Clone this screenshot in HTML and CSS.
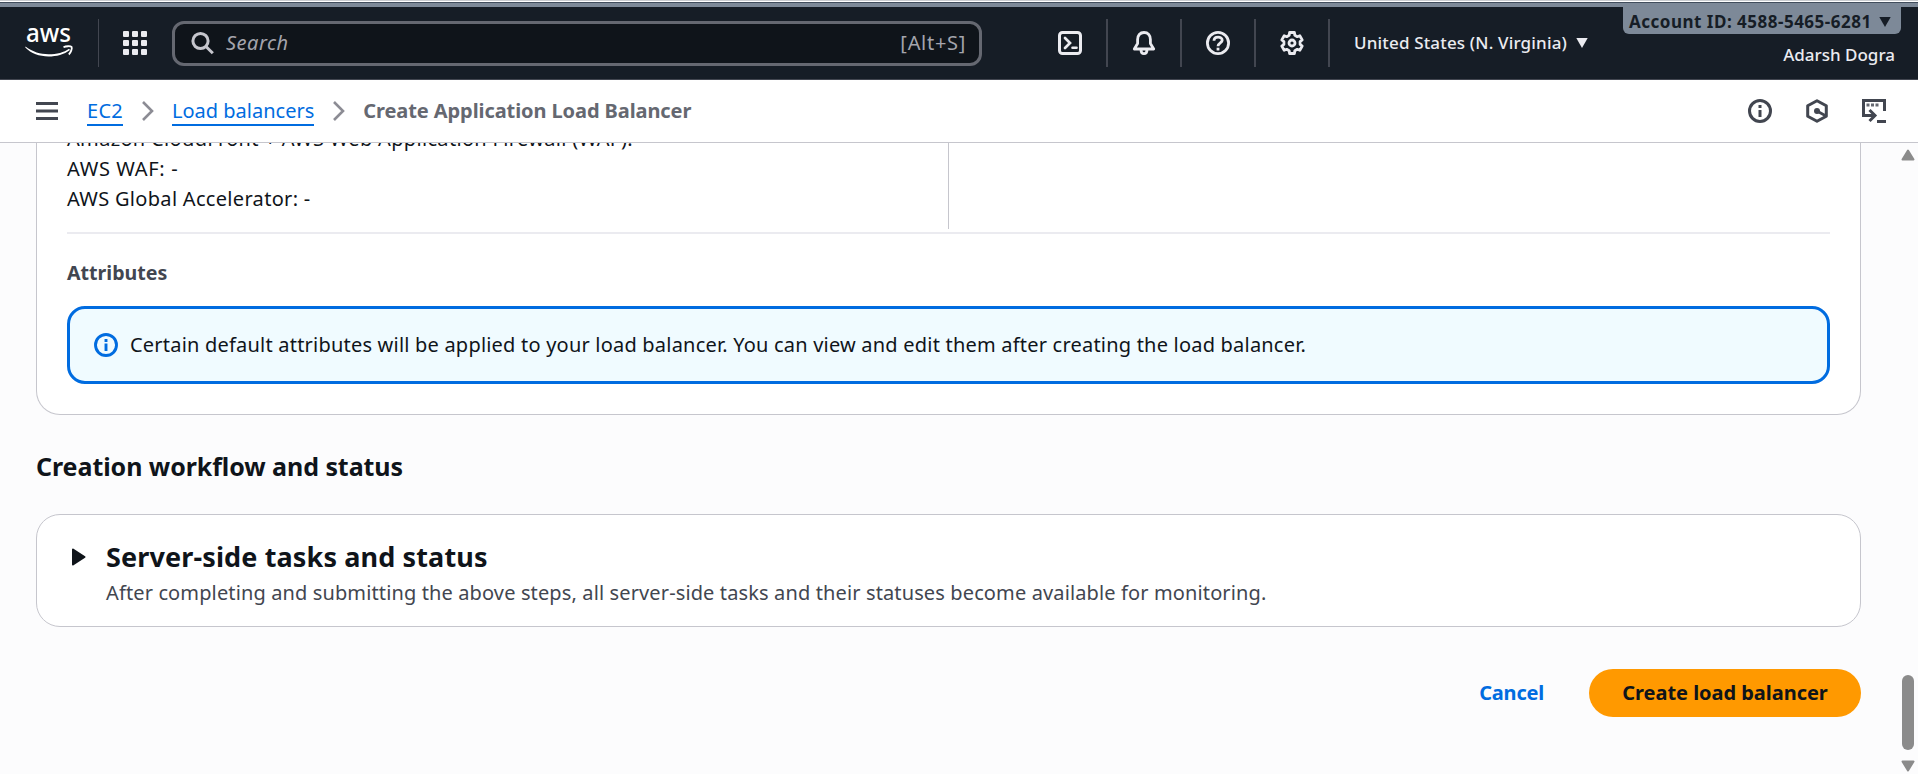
FILE: index.html
```html
<!DOCTYPE html>
<html lang="en">
<head>
<meta charset="utf-8">
<title>Create Application Load Balancer</title>
<link rel="stylesheet" href="styles.css">
</head>
<body>
<div class="account-strip"></div>
<header class="nav">
  <svg class="nav-logo" width="48" height="34" viewBox="0 0 48 34" role="img" aria-label="AWS">
    <text class="logo-text" x="1" y="16.300" textLength="45" lengthAdjust="spacingAndGlyphs">aws</text>
    <path d="M.5 20.600C8 26 15 28.300 23.500 28.300S39 26.300 44 22.700L45 24C39 28.500 31.500 30.500 23.500 30.500 14.500 30.500 6 27.500.3 21.600Z" fill="#fff"/>
    <path d="M38.500 21.300C41 20 45.500 19.900 46.600 20.900 47.300 22 46 26.500 43.800 28.500" fill="none" stroke="#fff" stroke-width="1.800"/>
  </svg>
  <i class="nav-divider nav-divider-thin"></i>
  <svg class="nav-apps" width="24" height="24" fill="#ebebf0">
    <rect width="6" height="6" rx="1"/><rect x="9" width="6" height="6" rx="1"/><rect x="18" width="6" height="6" rx="1"/>
    <rect y="9" width="6" height="6" rx="1"/><rect x="9" y="9" width="6" height="6" rx="1"/><rect x="18" y="9" width="6" height="6" rx="1"/>
    <rect y="18" width="6" height="6" rx="1"/><rect x="9" y="18" width="6" height="6" rx="1"/><rect x="18" y="18" width="6" height="6" rx="1"/>
  </svg>
  <div class="search">
    <svg width="24" height="24" viewBox="0 0 24 24" fill="none" stroke="#c6c6cd" stroke-width="3"><circle cx="9.500" cy="10" r="7.600"/><path d="M15 15.500L21.800 22.300"/></svg>
    <span class="search-placeholder">Search</span>
    <span class="search-key">[Alt+S]</span>
  </div>
  <div class="nav-tools">
    <svg width="24" height="24" viewBox="0 0 24 24" fill="none" stroke="#ebebf0" stroke-width="3"><rect x="1.500" y="1.500" width="21" height="21" rx="3"/><path d="M7 7L12 12L7 17" stroke-width="2.700" stroke-linecap="round"/><path d="M14.500 16.700H18.500" stroke-linecap="round" stroke-width="2.600"/></svg>
    <i class="nav-divider"></i>
    <svg width="24" height="24" viewBox="0 0 24 24" fill="none" stroke="#ebebf0" stroke-width="2.800" stroke-linejoin="round"><path d="M12 1.500C8 1.500 5.600 4.500 5.600 8.500V12.500L2.300 18H21.700L18.400 12.500V8.500C18.400 4.500 16 1.500 12 1.500Z"/><path d="M9 18.500C9 24 15 24 15 18.500"/></svg>
    <i class="nav-divider"></i>
    <svg width="24" height="24" viewBox="0 0 24 24" fill="none" stroke="#ebebf0" stroke-width="2.800"><circle cx="12" cy="12" r="10.600"/><path d="M8 9.800C8 4.800 16.200 5 16.200 9.300 16.200 12 12 11.800 12 15.300"/><path d="M12 16.700V19.500"/></svg>
    <i class="nav-divider"></i>
    <svg width="24" height="24" viewBox="0 0 24 24" fill="none" stroke="#ebebf0" stroke-width="2.800" stroke-linejoin="round"><path d="M9.600 1.500H14.400L14.800 4.300L17.300 5.700L19.800 4.700L22.200 8.900L20.100 10.600V13.400L22.200 15.100L19.800 19.300L17.300 18.300L14.800 19.700L14.400 22.500H9.600L9.200 19.700L6.700 18.300L4.200 19.300L1.800 15.100L3.900 13.400V10.600L1.800 8.900L4.200 4.700L6.700 5.700L9.200 4.300Z"/><circle cx="12" cy="12" r="3"/></svg>
    <i class="nav-divider"></i>
  </div>
  <div class="region"><span class="region-name">United States (N. Virginia)</span><svg width="12" height="10"><path d="M.3 0H11.700L6 10Z" fill="#ebebf0"/></svg></div>
  <div class="account">
    <div class="account-tab"><span class="account-id">Account ID: 4588-5465-6281</span><svg width="12" height="10"><path d="M.3 0H11.700L6 10Z" fill="#161d26"/></svg></div>
    <div class="account-user">Adarsh Dogra</div>
  </div>
</header>
<nav class="crumbs">
  <svg class="menu" width="22" height="18"><path d="M0 1.500H22M0 9H22M0 16.500H22" stroke="#424650" stroke-width="3"/></svg>
  <a class="crumb crumb-ec2">EC2</a>
  <svg class="chevron" width="12" height="20" viewBox="0 0 12 20"><path d="M1 1L10 10L1 19" fill="none" stroke="#8c8c94" stroke-width="2.600"/></svg>
  <a class="crumb crumb-lb">Load balancers</a>
  <svg class="chevron" width="12" height="20" viewBox="0 0 12 20"><path d="M1 1L10 10L1 19" fill="none" stroke="#8c8c94" stroke-width="2.600"/></svg>
  <span class="crumb-current">Create Application Load Balancer</span>
  <div class="crumb-tools">
    <svg width="24" height="24" viewBox="0 0 24 24" fill="none" stroke="#424650" stroke-width="3"><circle cx="12" cy="12" r="10.500"/><path d="M12 6V9M12 11V18"/></svg>
    <svg width="24" height="24" viewBox="0 0 24 24" fill="none" stroke="#424650" stroke-width="3"><path d="M12 1.700L21.300 6.800V17.200L12 22.300L2.700 17.200V6.800Z" stroke-linejoin="round"/><circle cx="12" cy="12" r="3" fill="#424650" stroke="none"/><path d="M12 12L21 17" stroke-width="2.600"/></svg>
    <svg width="24" height="24" viewBox="0 0 24 24" fill="none" stroke="#424650" stroke-width="3"><path d="M22.500 12V1.500H1.500V16.500H12M7.500 11L13 16.500L7.500 22"/><path d="M15 22.500H24"/><path d="M4.500 6H7.500M9 6H12M13.500 6H16.500" stroke="#656871"/></svg>
  </div>
</nav>
<div class="viewport">
  <main class="page">
    <section class="card summary">
      <div class="columns">
        <div class="services">
          <p class="service service-cf">Amazon CloudFront + AWS Web Application Firewall (WAF):</p>
          <p class="service service-waf">AWS WAF: -</p>
          <p class="service service-ga">AWS Global Accelerator: -</p>
        </div>
        <div class="column-right"></div>
      </div>
      <h4 class="attributes">Attributes</h4>
      <div class="alert">
        <svg width="24" height="24" viewBox="0 0 24 24" fill="none" stroke="#006ce0" stroke-width="2.900"><circle cx="12" cy="12" r="10.500"/><path d="M12 6V9M12 10.500V18"/></svg>
        <span class="alert-text">Certain default attributes will be applied to your load balancer. You can view and edit them after creating the load balancer.</span>
      </div>
    </section>
    <h3 class="heading">Creation workflow and status</h3>
    <section class="card tasks">
      <svg class="tasks-caret" width="15" height="18"><path d="M2 1.500L13.500 9L2 16.500Z" fill="#0f141a" stroke="#0f141a" stroke-width="2" stroke-linejoin="round"/></svg>
      <div>
        <h2 class="tasks-title">Server-side tasks and status</h2>
        <p class="tasks-text">After completing and submitting the above steps, all server-side tasks and their statuses become available for monitoring.</p>
      </div>
    </section>
    <div class="actions">
      <button class="cancel">Cancel</button>
      <button class="create">Create load balancer</button>
    </div>
  </main>
  <div class="scrollbar">
    <svg width="14" height="12"><path d="M7 1.500L12.500 10.500H1.500Z" fill="#8b8b8b" stroke="#8b8b8b" stroke-width="2" stroke-linejoin="round"/></svg>
    <div class="scroll-thumb"></div>
    <svg width="14" height="12"><path d="M7 10.500L12.500 1.500H1.500Z" fill="#8b8b8b" stroke="#8b8b8b" stroke-width="2" stroke-linejoin="round"/></svg>
  </div>
</div>
</body>
</html>
```

FILE: styles.css
```css
* { box-sizing: border-box; margin: 0; padding: 0; }
body {
  height: 774px;
  display: flex;
  flex-direction: column;
  overflow: hidden;
  background: #fcfcfd;
  color: #0f141a;
  font: 400 20px/30px "Noto Sans", "Open Sans", sans-serif;
}
svg { display: block; flex: none; overflow: visible; }
button { font: inherit; border: 0; background: none; }

.account-strip {
  flex: none;
  height: 7px;
  border-top: 1px solid #c9ccd0;
  background: linear-gradient(#fff 1px, #414d5c 1px, #414d5c 2px, #7d8998 2px);
}
.nav {
  flex: none;
  display: flex;
  align-items: center;
  height: 73px;
  padding-left: 25px;
  background: #161d26;
  border-bottom: 1px solid #424650;
  color: #ebebf0;
}
.nav-logo { margin-right: 25px; }
.logo-text { font-size: 26px; font-weight: 500; fill: #fff; }
.nav-divider { width: 2px; height: 48px; background: #424650; }
.nav-divider-thin { width: 1px; }
.nav-apps { margin: 0 25px 0 24px; }
.search {
  flex: none;
  display: flex;
  align-items: center;
  width: 810px;
  height: 45px;
  padding: 0 13px 0 16px;
  border: 3px solid #656871;
  border-radius: 12px;
  background: #0f141a;
  color: #a4a4ad;
}
.search-placeholder { margin-left: 11px; font-style: italic; letter-spacing: .5px; }
.search-key { margin-left: auto; letter-spacing: .7px; }
.nav-tools { display: flex; align-items: center; gap: 24px; margin-left: 76px; }
.region { display: flex; align-items: center; gap: 9px; margin-left: 24px; font-size: 17px; font-weight: 500; }
.region-name { letter-spacing: .164px; white-space: nowrap; }
.account {
  align-self: flex-start;
  display: flex;
  flex-direction: column;
  align-items: flex-end;
  margin: 0 17px 0 auto;
  font-size: 17px;
}
.account-tab {
  display: flex;
  align-items: center;
  gap: 7px;
  width: 278px;
  height: 27px;
  padding: 2px 7px 0 6px;
  border-radius: 0 0 6px 6px;
  background: #7d8998;
  color: #161d26;
  font-weight: 700;
}
.account-id { letter-spacing: .5px; white-space: nowrap; }
.account-user { margin: 6px 6px 0 0; font-weight: 500; }

.crumbs {
  flex: none;
  display: flex;
  align-items: center;
  height: 63px;
  padding: 0 32px 0 36px;
  background: #fff;
  border-bottom: 1px solid #c6c6cd;
}
.crumb { height: 29px; line-height: 28px; border-bottom: 2px solid #006ce0; color: #006ce0; }
.crumb-ec2 { margin-left: 29px; letter-spacing: .267px; }
.crumb-lb { letter-spacing: 0; }
.chevron { margin: 0 18px 0 19px; }
.crumb-current { color: #656871; font-weight: 700; letter-spacing: -.086px; }
.crumb-tools { display: flex; gap: 33px; margin-left: auto; }

.viewport { flex: 1; min-height: 0; display: flex; overflow: hidden; }
.page { flex: 1; padding: 0 42px 0 36px; }
.card { border: 1px solid #c6c6cd; border-radius: 24px; background: #fff; }
.summary {
  margin-top: -19px;
  padding: 0 30px 30px;
  border-top: 0;
  border-radius: 0 0 24px 24px;
}
.columns {
  display: grid;
  grid-template-columns: 881px 1fr;
  padding-bottom: 3px;
  border-bottom: 2px solid #ebebf0;
}
.services { padding-bottom: 15px; }
.column-right { border-left: 1px solid #c6c6cd; }
.service-cf { letter-spacing: .33px; }
.service-waf { letter-spacing: .65px; }
.service-ga { letter-spacing: .31px; }
.attributes { margin-top: 24px; color: #424650; font-size: 19.6px; }
.alert {
  display: flex;
  align-items: center;
  gap: 12px;
  height: 78px;
  margin-top: 18px;
  padding-left: 24px;
  border: 3px solid #006ce0;
  border-radius: 18px;
  background: #f0fbff;
}
.alert-text { letter-spacing: .208px; }
.heading { margin-top: 36px; font-size: 25px; letter-spacing: -.06px; }
.tasks { display: flex; height: 113px; margin-top: 33px; padding: 25px 34px 0; }
.tasks-caret { margin: 8px 20px 0 0; }
.tasks-title { font-size: 27px; line-height: 33px; letter-spacing: .13px; }
.tasks-text { margin-top: 5px; color: #424650; letter-spacing: .127px; }
.actions { display: flex; justify-content: flex-end; align-items: center; gap: 45px; margin-top: 42px; }
.cancel { color: #006ce0; font-weight: 700; letter-spacing: -.2px; }
.create {
  width: 272px;
  height: 48px;
  border-radius: 24px;
  background: #f90;
  color: #0f141a;
  font-weight: 700;
  letter-spacing: -.03px;
}
.scrollbar { flex: none; display: flex; flex-direction: column; align-items: center; width: 15px; padding: 6px 1px 2px 0; margin-right: 0; }
.page + .scrollbar { width: 17px; padding-right: 3px; margin-left: -2px; }
.scroll-thumb { width: 12px; height: 75px; margin: auto 0 10px; border-radius: 6px; background: #8b8b8b; }
```
